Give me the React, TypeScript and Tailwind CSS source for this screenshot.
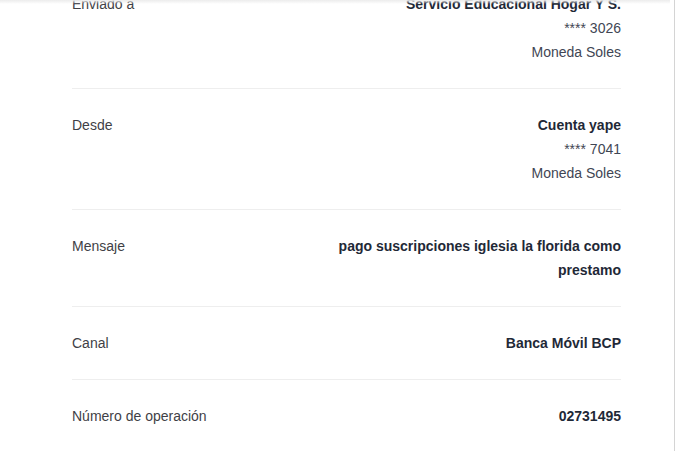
import React from "react";

type Row = { label: string; lines: { text: string; bold?: boolean }[] };

const rows: Row[] = [
  {
    label: "Enviado a",
    lines: [
      { text: "Servicio Educacional Hogar Y S.", bold: true },
      { text: "**** 3026" },
      { text: "Moneda Soles" },
    ],
  },
  {
    label: "Desde",
    lines: [
      { text: "Cuenta yape", bold: true },
      { text: "**** 7041" },
      { text: "Moneda Soles" },
    ],
  },
  {
    label: "Mensaje",
    lines: [{ text: "pago suscripciones iglesia la florida como prestamo", bold: true }],
  },
  { label: "Canal", lines: [{ text: "Banca Móvil BCP", bold: true }] },
  { label: "Número de operación", lines: [{ text: "02731495", bold: true }] },
];

export default function App() {
  return (
    <div
      className="relative h-[451px] w-[675px] overflow-hidden bg-white border-r border-[#d4d4d4]"
      style={{ fontFamily: '"Liberation Sans", Arial, sans-serif' }}
    >
      <div className="absolute left-0 right-[4px] top-0 z-10 h-[4px] bg-gradient-to-b from-[#ececec] to-white/0" />
      <div className="ml-[72px] w-[549px] mt-[-32px]">
        {rows.map((r) => (
          <div
            key={r.label}
            className="flex justify-between border-b border-[#eeeeee] py-6 text-[14px] leading-6"
          >
            <div className="text-[#3f3f46]">{r.label}</div>
            <div className="max-w-[300px] text-right">
              {r.lines.map((l, i) => (
                <div
                  key={i}
                  className={l.bold ? "font-bold text-[#1f2937]" : "text-[#3f4654]"}
                >
                  {l.text}
                </div>
              ))}
            </div>
          </div>
        ))}
      </div>
    </div>
  );
}
